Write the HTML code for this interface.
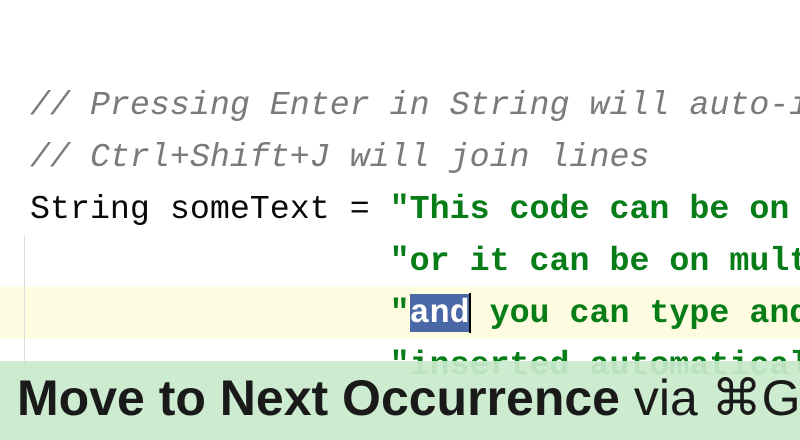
<!DOCTYPE html>
<html><head><style>
html,body{margin:0;padding:0;width:800px;height:440px;overflow:hidden;background:#fff;position:relative}
.l{position:absolute;left:30px;font-family:"Liberation Mono",monospace;font-size:33.3px;line-height:52px;white-space:pre;color:#080808}
.c{color:#7a7a7a;font-style:italic}
.s{color:#067d17;font-weight:bold}
.hl{position:absolute;left:0;top:287px;width:800px;height:52px;background:#fdfbe0}
.gut{position:absolute;left:24px;top:235px;width:1px;height:205px;background:#dcdcdc}
.sel{background:#4a67a6;color:#fff}
.caret{position:absolute;left:469px;top:293px;width:2px;height:40px;background:#000}
.bar{position:absolute;left:0;top:361px;width:800px;height:79px;background:rgba(200,234,203,0.93)}
.t{position:absolute;left:17px;top:368px;font-family:"Liberation Sans",sans-serif;font-size:50px;line-height:60px;white-space:nowrap;color:#1a1a1a}
</style></head><body>
<div class="hl"></div>
<div class="gut"></div>
<div class="l c" style="top:79px">// Pressing Enter in String will auto-insert</div>
<div class="l c" style="top:131px">// Ctrl+Shift+J will join lines</div>
<div class="l" style="top:183px">String someText = <span class="s">"This code can be on one line "</span></div>
<div class="l" style="top:235px">                  <span class="s">"or it can be on multiple lines "</span></div>
<div class="l" style="top:287px">                  <span class="s">"<span class="sel">and</span> you can type and</span></div>
<div class="caret"></div>
<div class="l" style="top:339px">                  <span class="s">"inserted automatically"</span></div>
<div class="bar"></div>
<div class="t"><b>Move to Next Occurrence</b> via ⌘G</div>
</body></html>
